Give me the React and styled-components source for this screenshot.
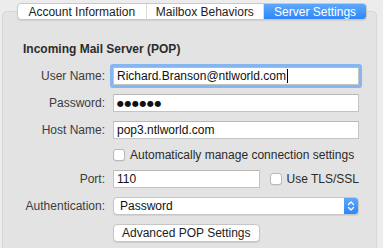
import React from "react";
import styled, { createGlobalStyle } from "styled-components";

const GlobalStyle = createGlobalStyle`
  html, body {
    margin: 0;
    padding: 0;
    background: #ececec;
  }
  body {
    font-family: "Liberation Sans", Arial, sans-serif;
    font-size: 12px;
    color: #222;
    -webkit-font-smoothing: antialiased;
  }
`;

const tabs = ["Account Information", "Mailbox Behaviors", "Server Settings"];

const App = () => {
  return (
    <>
      <GlobalStyle />
      <Window>
        <TabBar>
          {tabs.map((t, i) => (
            <Tab key={t} $active={i === 2} $first={i === 0}>
              {t}
            </Tab>
          ))}
        </TabBar>
        <Panel>
          <Heading>Incoming Mail Server (POP)</Heading>
          <Form>
            <Label>User Name:</Label>
            <Input $focused>
              Richard.Branson@ntlworld.com
              <Caret />
            </Input>

            <Label>Password:</Label>
            <Input>
              <Dots>●●●●●●</Dots>
            </Input>

            <Label>Host Name:</Label>
            <Input>pop3.ntlworld.com</Input>

            <span />
            <CheckRow>
              <Checkbox />
              <CheckText>Automatically manage connection settings</CheckText>
            </CheckRow>

            <Label>Port:</Label>
            <PortRow>
              <Input $width="150px">110</Input>
              <CheckRow>
                <Checkbox />
                <CheckText>Use TLS/SSL</CheckText>
              </CheckRow>
            </PortRow>

            <Label>Authentication:</Label>
            <Popup>
              <PopupText>Password</PopupText>
              <Stepper>
                <svg width="8" height="12" viewBox="0 0 8 12">
                  <path
                    d="M1.5 4.5 L4 2 L6.5 4.5 M1.5 7.5 L4 10 L6.5 7.5"
                    fill="none"
                    stroke="#fff"
                    strokeWidth="1.3"
                    strokeLinecap="round"
                    strokeLinejoin="round"
                  />
                </svg>
              </Stepper>
            </Popup>

            <span />
            <ButtonRow>
              <PushButton>Advanced POP Settings</PushButton>
            </ButtonRow>
          </Form>
        </Panel>
      </Window>
    </>
  );
};

export default App;

const Window = styled.div`
  width: 383px;
  height: 248px;
  overflow: hidden;
  display: flex;
  flex-direction: column;
  padding-top: 3px;
  box-sizing: border-box;
`;

const TabBar = styled.div`
  display: flex;
  align-self: flex-start;
  margin-left: 17px;
  width: 350px;
  height: 17px;
  background: #fff;
  border: 1px solid #c9c9c9;
  border-radius: 4px;
  box-shadow: 0 1px 1px rgba(0, 0, 0, 0.08);
  margin-bottom: -9px;
  position: relative;
  z-index: 1;
  box-sizing: border-box;
  overflow: hidden;
`;

const Tab = styled.div`
  display: flex;
  align-items: center;
  justify-content: center;
  flex: ${(p) => (p.$first ? "129" : p.$active ? "103" : "118")};
  font-size: 12px;
  color: ${(p) => (p.$active ? "#fff" : "#222")};
  background: ${(p) =>
    p.$active ? "linear-gradient(#5ea8fb, #2f86f6)" : "transparent"};
  border-left: ${(p) => (p.$first ? "none" : "1px solid #dcdcdc")};
  white-space: nowrap;
`;

const Panel = styled.div`
  margin-left: 2px;
  width: 375px;
  flex: 1;
  background: #e3e3e3;
  border: 1px solid #d6d6d6;
  border-bottom: none;
  border-radius: 5px 5px 0 0;
  padding: 29px 17px 0 20px;
  box-sizing: border-box;
`;

const Heading = styled.div`
  font-weight: bold;
  font-size: 12px;
  line-height: 16px;
  color: #2c2c2c;
  margin-bottom: 10px;
`;

const Form = styled.div`
  display: grid;
  grid-template-columns: 82px minmax(0, 1fr);
  column-gap: 8px;
  row-gap: 9px;
  align-items: center;
`;

const Label = styled.div`
  text-align: right;
  color: #3c3c3c;
  font-size: 12px;
  white-space: nowrap;
`;

const Input = styled.div`
  height: 18px;
  width: ${(p) => p.$width || "auto"};
  box-sizing: border-box;
  background: #fff;
  border: 1px solid #c4c4c4;
  border-top-color: #b8b8b8;
  padding: 0 3px;
  display: flex;
  align-items: center;
  font-size: 12px;
  color: #111;
  white-space: nowrap;
  box-shadow: ${(p) => (p.$focused ? "0 0 0 3px #86b6f1" : "none")};
  border-radius: ${(p) => (p.$focused ? "1px" : "0")};
`;

const Caret = styled.span`
  display: inline-block;
  width: 1px;
  height: 14px;
  background: #000;
  margin-left: 1px;
`;

const Dots = styled.span`
  font-family: "DejaVu Sans", sans-serif;
  font-size: 8px;
  letter-spacing: 0.5px;
  color: #111;
`;

const CheckRow = styled.div`
  display: flex;
  align-items: center;
  gap: 5px;
  height: 13px;
`;

const Checkbox = styled.span`
  width: 12px;
  height: 12px;
  flex-shrink: 0;
  box-sizing: border-box;
  background: #fff;
  border: 1px solid #b9b9b9;
  border-radius: 3px;
  box-shadow: 0 0.5px 0.5px rgba(0, 0, 0, 0.1);
`;

const CheckText = styled.span`
  font-size: 12px;
  color: #2a2a2a;
  white-space: nowrap;
`;

const PortRow = styled.div`
  display: flex;
  align-items: center;
  gap: 10px;
`;

const Popup = styled.div`
  height: 18px;
  box-sizing: border-box;
  background: #fff;
  border: 1px solid #c6c6c6;
  border-radius: 4px;
  display: flex;
  align-items: center;
  box-shadow: 0 1px 1px rgba(0, 0, 0, 0.08);
  overflow: hidden;
`;

const PopupText = styled.span`
  flex: 1;
  padding-left: 6px;
  font-size: 12px;
  color: #111;
`;

const Stepper = styled.span`
  width: 14px;
  height: 100%;
  background: linear-gradient(#5ea8fb, #2f86f6);
  display: flex;
  align-items: center;
  justify-content: center;
`;

const ButtonRow = styled.div`
  display: flex;
`;

const PushButton = styled.div`
  height: 18px;
  box-sizing: border-box;
  padding: 0 8px;
  background: #fff;
  border: 1px solid #c6c6c6;
  border-radius: 4px;
  box-shadow: 0 1px 1px rgba(0, 0, 0, 0.1);
  display: flex;
  align-items: center;
  font-size: 12px;
  color: #1c1c1c;
  white-space: nowrap;
`;
